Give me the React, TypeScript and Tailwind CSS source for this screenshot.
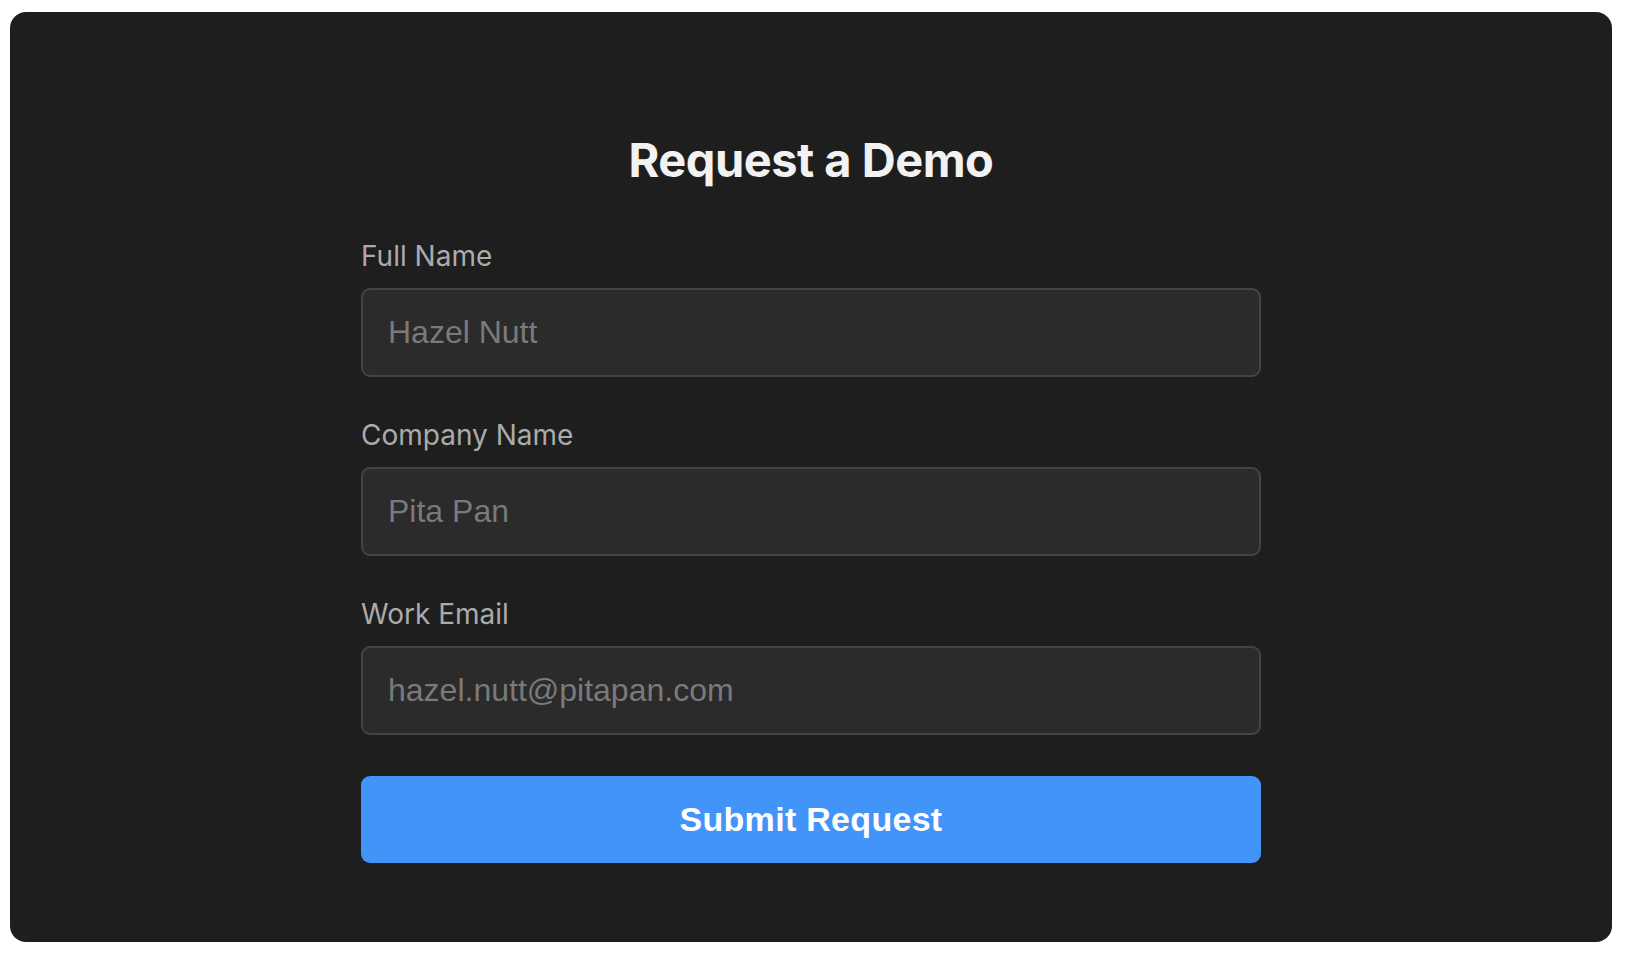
import React from 'react';

const FIELDS = [
  { label: 'Full Name', placeholder: 'Hazel Nutt', type: 'text' },
  { label: 'Company Name', placeholder: 'Pita Pan', type: 'text' },
  { label: 'Work Email', placeholder: 'hazel.nutt@pitapan.com', type: 'email' },
];

export default function App() {
  return (
    <div className="min-h-screen bg-white pl-[10px] pr-[14px] pt-[12px] pb-[14px]">
      <div className="h-[930px] rounded-[16px] bg-[#1e1e1e] pt-[120px] flex flex-col items-center">
        {/* Title */}
        <h1 className="font-['Inter',sans-serif] font-bold text-[47px] leading-[56px] text-[#f2f2f2] tracking-[-0.5px]">
          Request a Demo
        </h1>

        {/* Form */}
        <form className="w-[900px] mt-[51px] flex flex-col gap-[41px]" onSubmit={(e) => e.preventDefault()}>
          {FIELDS.map((f) => (
            <div key={f.label} className="flex flex-col gap-[15px]">
              <label className="font-['Inter',sans-serif] text-[28px] leading-[34px] text-[#ababab]">
                {f.label}
              </label>
              <input
                type={f.type}
                placeholder={f.placeholder}
                className="h-[89px] w-full rounded-[9px] border-2 border-[#444444] bg-[#2b2b2b] pl-[25px] font-['Liberation_Sans',Arial,sans-serif] text-[32px] text-[#dddddd] placeholder:text-[#7a7a7a] outline-none"
              />
            </div>
          ))}
          <button
            type="submit"
            className="h-[87px] w-full rounded-[9px] bg-[#4394f8] font-['Liberation_Sans',Arial,sans-serif] font-bold text-[34px] tracking-[0.3px] text-white"
          >
            Submit Request
          </button>
        </form>
      </div>
    </div>
  );
}
